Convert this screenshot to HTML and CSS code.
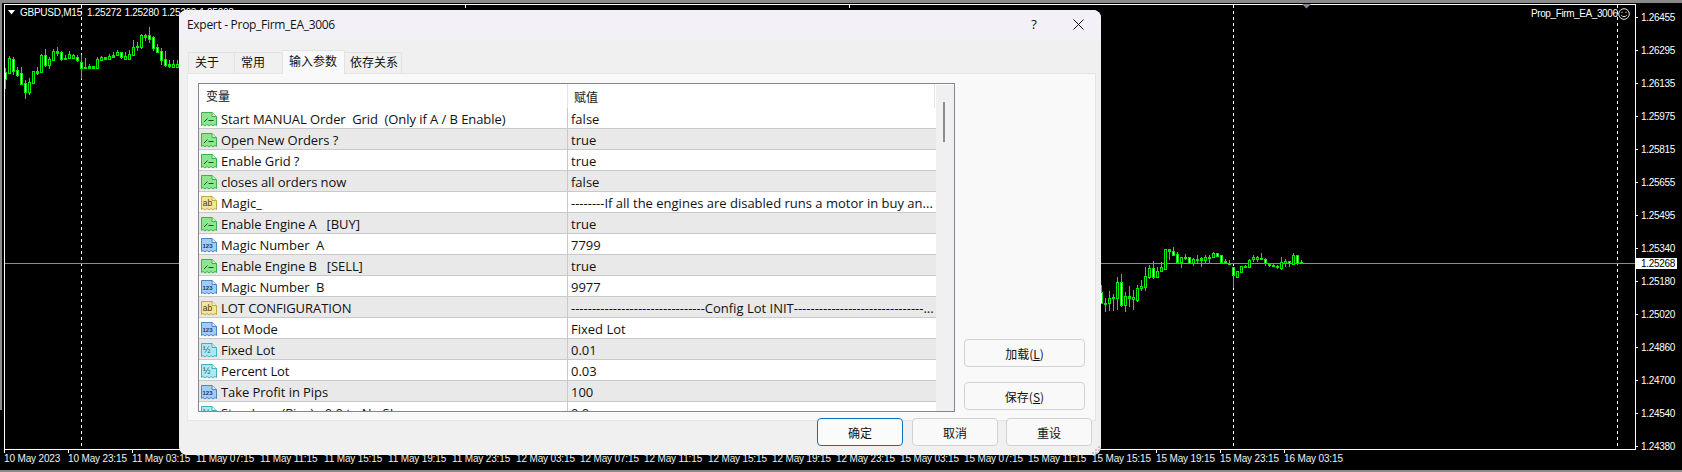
FILE: index.html
```html
<!DOCTYPE html>
<html lang="zh">
<head>
<meta charset="utf-8">
<title>Expert - Prop_Firm_EA_3006</title>
<link rel="stylesheet" href="styles.css">
</head>
<body>
<svg width="0" height="0" class="defs">
  <symbol id="sheet-g" viewBox="0 0 16 16"><path class="pg" d="M.5 1.500h10.500l4.500 4v9l-1.500-1-2 1.500-2-1.500-2 1.500-2-1.500-2 1.500-2-1.500-1.500 1z"/><path class="pg-fold" d="M11 1.500v4h4.500"/><path class="pg-mark" d="M3 11l3.500-3.500M7.500 9.500h5"/></symbol>
  <symbol id="sheet-a" viewBox="0 0 16 16"><path class="pa" d="M.5 1.500h10.500l4.500 4v9l-1.500-1-2 1.500-2-1.500-2 1.500-2-1.500-2 1.500-2-1.500-1.500 1z"/><path class="pa-fold" d="M11 1.500v4h4.500"/></symbol>
  <symbol id="sheet-n" viewBox="0 0 16 16"><path class="pn" d="M.5 1.500h10.500l4.500 4v9l-1.500-1-2 1.500-2-1.500-2 1.500-2-1.500-2 1.500-2-1.500-1.500 1z"/><path class="pn-fold" d="M11 1.500v4h4.500"/></symbol>
  <symbol id="sheet-v" viewBox="0 0 16 16"><path class="pv" d="M.5 1.500h10.500l4.500 4v9l-1.500-1-2 1.500-2-1.500-2 1.500-2-1.500-2 1.500-2-1.500-1.500 1z"/><path class="pv-fold" d="M11 1.500v4h4.500"/></symbol>
</svg>

<main class="screen">
  <svg id="plot" class="plot" width="1682" height="472" viewBox="0 0 1682 472"></svg>
  <div class="spacer"></div>
  <div class="price-axis">
    <span>1.26455</span><span>1.26295</span><span>1.26135</span><span>1.25975</span><span>1.25815</span><span>1.25655</span><span>1.25495</span><span>1.25340</span><span>1.25180</span><span>1.25020</span><span>1.24860</span><span>1.24700</span><span>1.24540</span><span>1.24380</span>
  </div>
  <div class="time-axis">
    <span>10 May 2023</span><span>10 May 23:15</span><span>11 May 03:15</span><span>11 May 07:15</span><span>11 May 11:15</span><span>11 May 15:15</span><span>11 May 19:15</span><span>11 May 23:15</span><span>12 May 03:15</span><span>12 May 07:15</span><span>12 May 11:15</span><span>12 May 15:15</span><span>12 May 19:15</span><span>12 May 23:15</span><span>15 May 03:15</span><span>15 May 07:15</span><span>15 May 11:15</span><span>15 May 15:15</span><span>15 May 19:15</span><span>15 May 23:15</span><span>16 May 03:15</span>
  </div>

  <div class="symbol-info"><span class="sym">GBPUSD,M15</span><span>1.25272</span><span>1.25280</span><span>1.25268</span><span>1.25268</span></div>
  <div class="ea-label">Prop_Firm_EA_3006</div>
  <svg class="smiley" width="12" height="12" viewBox="0 0 12 12"><circle cx="6" cy="6" r="5.300"/><path d="M3.300 7.300c1.300 1.800 4 1.800 5.400 0"/><path d="M4 3.800v1.200M8 3.800v1.200"/></svg>
  <div class="price-tag">1.25268</div>

  <section class="dialog">
    <header class="titlebar">
      <span class="title">Expert - Prop_Firm_EA_3006</span>
      <span class="help">?</span>
      <svg class="close" width="11" height="11" viewBox="0 0 11 11"><path d="M.5.500l10 10M10.500.500l-10 10"/></svg>
    </header>
    <nav class="tabs">
      <span class="tab t1">关于</span>
      <span class="tab t2">常用</span>
      <span class="tab t3 active">输入参数</span>
      <span class="tab t4">依存关系</span>
    </nav>
    <div class="panel">
      <div class="list">
        <div class="rows">
          <div class="row head"><span class="c1">变量</span><span class="c2">赋值</span></div>
          <div class="row"><span class="c1"><svg class="ic" viewBox="0 0 16 16"><use href="#sheet-g"/></svg>Start MANUAL Order  Grid  (Only if A / B Enable)</span><span class="c2">false</span></div>
          <div class="row alt"><span class="c1"><svg class="ic" viewBox="0 0 16 16"><use href="#sheet-g"/></svg>Open New Orders ?</span><span class="c2">true</span></div>
          <div class="row"><span class="c1"><svg class="ic" viewBox="0 0 16 16"><use href="#sheet-g"/></svg>Enable Grid ?</span><span class="c2">true</span></div>
          <div class="row alt"><span class="c1"><svg class="ic" viewBox="0 0 16 16"><use href="#sheet-g"/></svg>closes all orders now</span><span class="c2">false</span></div>
          <div class="row"><span class="c1"><svg class="ic" viewBox="0 0 16 16"><use href="#sheet-a"/><text x="1.800" y="10.500" class="ic-t ic-a">ab</text></svg>Magic_</span><span class="c2">--------If all the engines are disabled runs a motor in buy an...</span></div>
          <div class="row alt"><span class="c1"><svg class="ic" viewBox="0 0 16 16"><use href="#sheet-g"/></svg>Enable Engine A   [BUY]</span><span class="c2">true</span></div>
          <div class="row"><span class="c1"><svg class="ic" viewBox="0 0 16 16"><use href="#sheet-n"/><text x="1.500" y="11" class="ic-t ic-n">123</text></svg>Magic Number  A</span><span class="c2">7799</span></div>
          <div class="row alt"><span class="c1"><svg class="ic" viewBox="0 0 16 16"><use href="#sheet-g"/></svg>Enable Engine B   [SELL]</span><span class="c2">true</span></div>
          <div class="row"><span class="c1"><svg class="ic" viewBox="0 0 16 16"><use href="#sheet-n"/><text x="1.500" y="11" class="ic-t ic-n">123</text></svg>Magic Number  B</span><span class="c2">9977</span></div>
          <div class="row alt"><span class="c1"><svg class="ic" viewBox="0 0 16 16"><use href="#sheet-a"/><text x="1.800" y="10.500" class="ic-t ic-a">ab</text></svg>LOT CONFIGURATION</span><span class="c2">--------------------------------Config Lot INIT-------------------------------...</span></div>
          <div class="row"><span class="c1"><svg class="ic" viewBox="0 0 16 16"><use href="#sheet-n"/><text x="1.500" y="11" class="ic-t ic-n">123</text></svg>Lot Mode</span><span class="c2">Fixed Lot</span></div>
          <div class="row alt"><span class="c1"><svg class="ic" viewBox="0 0 16 16"><use href="#sheet-v"/><text x="2" y="11" class="ic-t ic-v">½</text></svg>Fixed Lot</span><span class="c2">0.01</span></div>
          <div class="row"><span class="c1"><svg class="ic" viewBox="0 0 16 16"><use href="#sheet-v"/><text x="2" y="11" class="ic-t ic-v">½</text></svg>Percent Lot</span><span class="c2">0.03</span></div>
          <div class="row alt"><span class="c1"><svg class="ic" viewBox="0 0 16 16"><use href="#sheet-n"/><text x="1.500" y="11" class="ic-t ic-n">123</text></svg>Take Profit in Pips</span><span class="c2">100</span></div>
          <div class="row"><span class="c1"><svg class="ic" viewBox="0 0 16 16"><use href="#sheet-v"/><text x="2" y="11" class="ic-t ic-v">½</text></svg>Stop Loss (Pips) - 0.0 to No SL</span><span class="c2">0.0</span></div>
        </div>
        <div class="scrollbar"><div class="thumb"></div></div>
      </div>
      <div class="side">
        <button class="btn side-btn">加载(<u>L</u>)</button>
        <button class="btn side-btn">保存(<u>S</u>)</button>
      </div>
    </div>
    <footer class="footer">
      <button class="btn foot-btn primary">确定</button>
      <button class="btn foot-btn">取消</button>
      <button class="btn foot-btn">重设</button>
    </footer>
    <svg class="grip" width="9" height="9" viewBox="0 0 9 9"><path d="M6 0h2v2H6zM3 3h2v2H3zM6 3h2v2H6zM0 6h2v2H0zM3 6h2v2H3zM6 6h2v2H6z"/></svg>
  </section>
</main>
<script src="chart.js"></script>
</body>
</html>
```

FILE: styles.css
```css
* { box-sizing: border-box; }
html, body { margin: 0; padding: 0; background: #000; }
.defs { position: absolute; }

.screen {
  position: relative;
  width: 1682px;
  height: 472px;
  overflow: hidden;
  background: #000;
  display: grid;
  grid-template-columns: 1641px 41px;
  grid-template-rows: 450px 22px;
  font-family: "Liberation Sans", Arial, sans-serif;
  font-size: 10px;
  color: #fff;
}
.plot { position: absolute; left: 0; top: 0; }
.spacer { grid-column: 1; grid-row: 1; }

.price-axis {
  grid-column: 2;
  grid-row: 1;
  position: relative;
  display: flex;
  flex-direction: column;
  padding-top: 1px;
  letter-spacing: -.3px;
}
.price-axis span { height: 33px; line-height: 33px; }

.time-axis {
  grid-column: 1 / 3;
  grid-row: 2;
  position: relative;
  display: flex;
  padding-left: 4px;
  color: #f2f2f2;
}
.time-axis span { flex: 0 0 64px; line-height: 18px; white-space: nowrap; letter-spacing: -.15px; }

.symbol-info {
  position: absolute;
  left: 20px;
  top: 7px;
  display: flex;
  gap: 3px;
  line-height: 12px;
  letter-spacing: -.25px;
}
.symbol-info .sym { margin-right: 2px; }

.ea-label {
  position: absolute;
  left: 1531px;
  top: 8px;
  line-height: 12px;
  letter-spacing: -.4px;
}
.smiley { position: absolute; left: 1618px; top: 8px; fill: none; stroke: #e8e8e8; stroke-width: 1; }
.price-tag {
  position: absolute;
  left: 1636px;
  top: 258px;
  width: 41px;
  height: 11px;
  padding-left: 5px;
  background: #fff;
  color: #000;
  line-height: 11px;
  letter-spacing: -.3px;
}

/* dialog */
.dialog {
  position: absolute;
  left: 179px;
  top: 10px;
  width: 922px;
  height: 445px;
  background: #f0f0f0;
  border-radius: 8px;
  overflow: hidden;
  display: flex;
  flex-direction: column;
  font-family: "Open Sans", "Noto Sans CJK SC", sans-serif;
  font-size: 12px;
  color: #111;
}
.titlebar {
  flex: 0 0 30px;
  display: flex;
  align-items: center;
  background: #f3f1f7;
  padding: 0 0 2px 8px;
}
.title { flex: 1; letter-spacing: -.3px; }
.help { width: 12px; text-align: center; font-size: 13px; margin-right: 33px; }
.close { margin-right: 17px; fill: none; stroke: #111; stroke-width: 1; }

.tabs {
  flex: 0 0 33px;
  display: flex;
  align-items: flex-end;
  padding-left: 9px;
  font-family: "Noto Sans CJK SC", sans-serif;
}
.tab {
  height: 21px;
  line-height: 18px;
  padding-left: 6px;
  border: 1px solid #e3e3e3;
  border-bottom: 0;
  border-left: 0;
  background: #f0f0f0;
  color: #111;
}
.t1 { width: 47px; border-left: 1px solid #e3e3e3; }
.t2 { width: 48px; }
.t3 { width: 62px; }
.t4 { width: 57px; padding-left: 5px; }
.tab.active {
  height: 24px;
  line-height: 20px;
  background: #f9f9f9;
  position: relative;
  margin-bottom: -1px;
  z-index: 1;
}

.panel {
  position: relative;
  flex: 0 0 348px;
  min-height: 0;
  height: 348px;
  margin: 0 5px 0 8px;
  padding: 10px 0 8px 10px;
  display: flex;
  background: #f9f9f9;
  border: 1px solid #e5e5e5;
  border-left-color: #e8e8e8;
}
.list {
  flex: 0 0 757px;
  min-height: 0;
  margin-top: -1px;
  display: flex;
  border: 1px solid #828790;
  background: #fff;
  overflow: hidden;
}
.rows { flex: 0 0 737px; overflow: hidden; }
.row {
  display: flex;
  height: 21px;
  border-bottom: 1px solid #c9c9c9;
  white-space: pre;
  line-height: 18px;
  font-size: 13px;
}
.row.alt { background: #e9e9e9; }
.row.head { height: 24px; border-bottom: 0; line-height: 26px; font-size: 12px; font-family: "Noto Sans CJK SC", sans-serif; }
.c1 {
  flex: 0 0 369px;
  display: flex;
  align-items: center;
  padding: 2px 0 0 2px;
  border-right: 1px solid #c9c9c9;
  overflow: hidden;
  letter-spacing: -.07px;
}
.c2 { flex: 1; padding: 2px 0 0 3px; overflow: hidden; }
.head .c1, .head .c2 { padding-top: 0; }
.head .c1 { padding-left: 7px; border-right-color: #e4e4e4; }
.head .c2 { padding-left: 6px; border-right: 1px solid #e4e4e4; margin-right: 1px; }
.ic { flex: 0 0 16px; width: 16px; height: 16px; margin-right: 4px; }

.pg { fill: #8fe48f; stroke: #38b24a; }
.pg-fold { fill: #d4f5d4; stroke: #38b24a; }
.pg-mark { fill: none; stroke: #0c5a20; stroke-width: 1; }
.pa { fill: #f4e59c; stroke: #c2a83e; }
.pa-fold { fill: #fbf4cf; stroke: #c2a83e; }
.pn { fill: #a6cbf2; stroke: #4a85c6; }
.pn-fold { fill: #dcebfb; stroke: #4a85c6; }
.pv { fill: #aee8ec; stroke: #3fb3bc; }
.pv-fold { fill: #e0f8fa; stroke: #3fb3bc; }
.ic-t { font-family: "Liberation Sans", sans-serif; letter-spacing: 0; }
.ic-a { font-size: 8.500px; fill: #4a3c10; }
.ic-n { font-size: 6px; font-weight: 700; fill: #123a78; }
.ic-v { font-size: 9px; fill: #0e5f68; }

.scrollbar {
  flex: 1;
  background: #f0f0f0;
  padding: 17px 7px 0;
  margin: 1px 0 0;
}
.thumb { width: 2px; height: 40px; background: #8b8b8b; }

.side {
  flex: 0 0 121px;
  margin-left: 9px;
  margin-bottom: 2px;
  display: flex;
  flex-direction: column;
  justify-content: flex-end;
  gap: 15px;
}
.btn {
  height: 28px;
  padding: 0;
  background: #f9f9f9;
  border: 1px solid #d2d2d2;
  border-radius: 4px;
  color: #111;
  font-family: "Noto Sans CJK SC", sans-serif;
  font-size: 12px;
}
.footer {
  position: relative;
  margin-top: -3px;
  padding-right: 9px;
  display: flex;
  justify-content: flex-end;
  gap: 8px;
}
.foot-btn { width: 86px; }
.primary { margin-right: 1px; border-color: #0a6fc2; background: #fbfbfb; }
.grip { position: absolute; right: 0; bottom: 0; fill: #c6c6c6; }
```

FILE: chart.js
```js
// Candle data as [high, low, bodyTop, bodyBottom, fill] in 1/3 pixel units.
var LEFT = [
[145,207,155,177,'w'],[108,160,115,158,'h'],[112,165,118,152,'w'],[140,170,150,165,'w'],[140,195,160,192,'w'],[180,237,190,215,'w'],[175,225,187,215,'h'],[152,190,154,188,'h'],[140,165,153,158,'g'],[102,158,105,155,'h'],[87,140,105,135,'w'],[112,147,118,135,'h'],[87,122,94,120,'h'],[82,108,94,100,'g'],[92,122,97,117,'w'],[105,120,113,116,'g'],[94,118,103,115,'h'],[102,117,106,113,'h'],[106,125,111,120,'w'],[105,178,127,143,'w'],[113,143,141,143,'g'],[133,145,139,143,'g'],[137,148,139,144,'g'],[112,143,118,143,'h'],[108,120,112,119,'h'],[110,120,112,117,'g'],[102,120,109,117,'h'],[96,112,105,110,'g'],[90,108,96,105,'h'],[96,118,97,110,'w'],[97,118,109,116,'h'],[90,120,103,117,'h'],[60,107,82,105,'h'],[67,93,78,81,'g'],[42,86,45,80,'h'],[42,62,46,50,'g'],[21,68,46,56,'w'],[48,93,52,83,'w'],[73,98,82,95,'w'],[85,135,94,120,'w'],[93,140,118,135,'w'],[120,143,133,137,'g'],[120,143,133,140,'h'],[120,143,133,140,'h']
];
var RIGHT = [
[195,250,217,250,'w'],[235,275,248,250,'g'],[213,272,234,250,'h'],[222,272,230,235,'g'],[170,270,186,235,'h'],[162,262,186,255,'w'],[215,275,228,255,'h'],[198,262,228,233,'g'],[210,270,232,238,'h'],[195,245,205,240,'h'],[180,212,198,205,'h'],[142,212,168,200,'h'],[135,178,144,170,'h'],[124,178,144,170,'w'],[140,175,153,170,'h'],[126,155,142,152,'h'],[86,150,88,146,'h'],[86,120,88,92,'g'],[82,106,92,104,'w'],[95,130,102,125,'w'],[110,145,112,125,'h'],[102,120,112,114,'g'],[112,130,112,128,'w'],[115,138,118,130,'h'],[105,130,116,118,'g'],[110,140,115,120,'g'],[105,130,112,120,'h'],[105,128,110,112,'g'],[95,115,100,112,'h'],[98,112,100,107,'w'],[105,128,106,125,'w'],[118,132,124,130,'g'],[120,130,128,130,'g'],[140,205,142,165,'w'],[152,175,154,170,'h'],[138,155,138,155,'h'],[135,140,138,140,'g'],[118,142,120,140,'h'],[105,125,110,118,'h'],[108,125,110,117,'h'],[98,120,114,118,'g'],[115,138,118,130,'w'],[130,142,132,136,'w'],[132,142,136,139,'g'],[134,148,138,142,'g'],[112,150,127,144,'h'],[118,140,124,130,'h'],[122,140,124,130,'w'],[100,135,105,133,'h'],[105,135,105,130,'w'],[120,130,127,130,'g']
];
var NS = 'http://www.w3.org/2000/svg';
var plot = document.getElementById('plot');
function el(name, attrs) {
  var e = document.createElementNS(NS, name);
  for (var k in attrs) e.setAttribute(k, attrs[k]);
  plot.appendChild(e);
  return e;
}
function line(x1, y1, x2, y2, stroke, dash) {
  var a = { x1: x1, y1: y1, x2: x2, y2: y2, stroke: stroke, 'stroke-width': 1 };
  if (dash) a['stroke-dasharray'] = dash;
  el('line', a);
}
[81, 465, 849, 1233, 1617].forEach(function (x) { line(x + .5, 5, x + .5, 449, '#fff', '3 3'); });
line(4, 263.5, 1635, 263.5, '#8a8f96');
function candles(data, x0, yo) {
  data.forEach(function (c, i) {
    var x = x0 + 4 * i;
    var hi = Math.round(yo + c[0] / 3), lo = Math.round(yo + c[1] / 3);
    var t = Math.round(yo + c[2] / 3), b = Math.round(yo + c[3] / 3);
    if (b <= t) b = t + 1;
    el('rect', { x: x, y: hi, width: 1, height: lo - hi, fill: '#00f000' });
    var fill = c[4] === 'w' ? '#fff' : c[4] === 'h' ? '#000' : '#00f000';
    el('rect', { x: x - 1, y: t, width: 3, height: b - t + 1, fill: '#00f000' });
    if (b - t >= 2) el('rect', { x: x, y: t + 1, width: 1, height: b - t - 1, fill: fill });
  });
}
candles(LEFT, 5, 20);
candles(RIGHT, 1101, 220);
// chart frame and axis ticks
line(4, 4.5, 1636, 4.5, '#fff');
line(4.5, 4, 4.5, 450, '#fff');
line(1635.5, 4, 1635.5, 450, '#fff');
line(4, 449.5, 1636, 449.5, '#fff');
for (var p = 0; p < 14; p++) {
  var y = Math.round(17 + p * 33.03) + .5;
  line(1636, y, 1638, y, '#fff');
}
for (var t = 0; t < 21; t++) {
  var x = 5 + t * 64 - .5;
  line(x, 450, x, 453, '#fff');
}
el('path', { d: 'M1302 4h9l-4.500 4.500z', fill: '#7d8a96' });
el('path', { d: 'M8 10h7l-3.500 4.500z', fill: '#fff' });
// window edges
el('rect', { x: 0, y: 0, width: 1682, height: 3, fill: '#8a8a8a' });
el('rect', { x: 0, y: 0, width: 2, height: 410, fill: '#8a8a8a' });
el('rect', { x: 0, y: 470, width: 1682, height: 2, fill: '#8a8a8a' });
```
